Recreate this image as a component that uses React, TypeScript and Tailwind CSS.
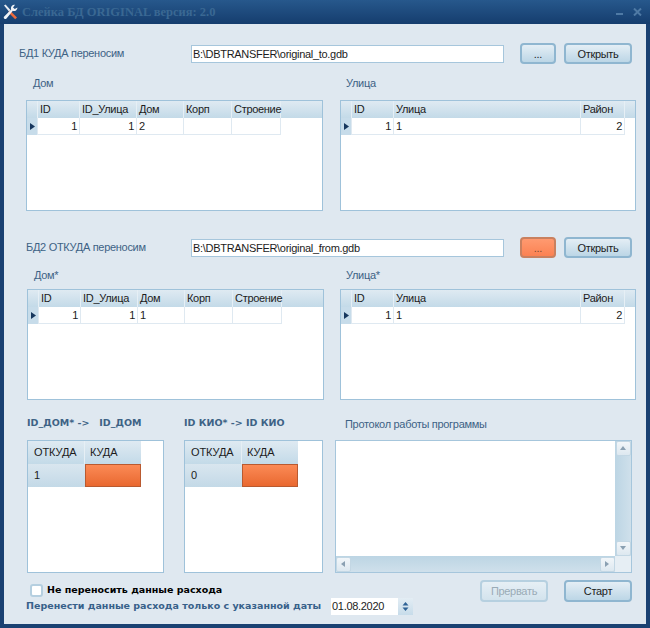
import { ReactNode } from 'react'

type Col = { label: string; width: number; right?: boolean; value: string }

const houseCols = (dom: string): Col[] => [
  { label: 'ID', width: 42, right: true, value: '1' },
  { label: 'ID_Улица', width: 57, right: true, value: '1' },
  { label: 'Дом', width: 47, value: dom },
  { label: 'Корп', width: 48, value: '' },
  { label: 'Строение', width: 49, value: '' },
]

const streetCols: Col[] = [
  { label: 'ID', width: 42, right: true, value: '1' },
  { label: 'Улица', width: 187, value: '1' },
  { label: 'Район', width: 44, right: true, value: '2' },
]

function DataGrid({ cols, width }: { cols: Col[]; width: string }) {
  return (
    <div className={`${width} h-[111px] bg-white border border-[#9fc2da]`}>
      <div className="flex h-[17px] bg-gradient-to-b from-[#dfeaf2] to-[#c3dae8]">
        <div className="w-[11px] border-r border-[#e6eff5]" />
        {cols.map((c) => (
          <div key={c.label} style={{ width: c.width }} className="pl-[2px] leading-[17px] border-r border-[#e6eff5] text-[#1c1c1c] whitespace-nowrap">
            {c.label}
          </div>
        ))}
      </div>
      <div className="flex h-[17px]">
        <div className="w-[11px] bg-[#c7dcea] border-r border-[#dfe9f1] flex items-center justify-center">
          <svg width="5" height="7" viewBox="0 0 5 7"><path d="M0 0l5 3.500-5 3.500z" fill="#17375e" /></svg>
        </div>
        {cols.map((c) => (
          <div key={c.label} style={{ width: c.width }} className={`px-[2px] leading-[17px] border-r border-b border-[#dfe9f1] text-[#1c1c1c] ${c.right ? 'text-right' : ''}`}>
            {c.value}
          </div>
        ))}
      </div>
    </div>
  )
}

function MapGrid({ width, value }: { width: string; value: string }) {
  return (
    <div className={`${width} h-[133px] bg-white border border-[#9fc2da]`}>
      <div className="flex h-[23px] w-[113px] bg-gradient-to-b from-[#dfeaf2] to-[#c3dae8] leading-[23px] text-[#1c1c1c]">
        <div className="w-[57px] pl-[6px] border-r border-[#e6eff5] tracking-[-0.1px]">ОТКУДА</div>
        <div className="w-[56px] pl-[5px] tracking-[-0.1px]">КУДА</div>
      </div>
      <div className="flex h-[23px] w-[113px]">
        <div className="w-[57px] pl-[6px] leading-[22px] bg-gradient-to-b from-[#d9e6ef] to-[#c3d9e7] text-[#1c1c1c]">{value}</div>
        <div className="w-[56px] bg-gradient-to-b from-[#fb8a55] to-[#e9682f] border border-[#b95a30]" />
      </div>
    </div>
  )
}

function Btn({ children, width, height = 'h-[21px]', tone = 'blue' }: { children: ReactNode; width: string; height?: string; tone?: 'blue' | 'orange' | 'off' }) {
  const tones = {
    blue: 'from-[#e4eef5] to-[#bcd6e6] border-[#8fb6d0] text-[#1c1c1c]',
    orange: 'from-[#ff9a70] to-[#fb8152] border-[#c9805f] text-[#7a4a30]',
    off: 'from-[#e6eff5] to-[#d3e3ed] border-[#b6d0e0] text-[#9aabb6]',
  }
  return (
    <button className={`${width} ${height} shrink-0 rounded-[4px] border-2 bg-gradient-to-b text-center leading-[16px] ${tones[tone]}`}>
      {children}
    </button>
  )
}

function ScrollBtn({ dir }: { dir: 'up' | 'down' | 'left' | 'right' }) {
  const paths = { up: 'M0 4l3-4 3 4z', down: 'M0 0l3 4 3-4z', left: 'M4 0l-4 3 4 3z', right: 'M0 0l4 3-4 3z' }
  return (
    <div className="w-[15px] h-[15px] shrink-0 rounded-[2px] bg-gradient-to-b from-[#f2f6f9] to-[#dde8f0] border border-[#c3d7e4] flex items-center justify-center">
      <svg width="6" height="6" viewBox="0 0 6 6"><path d={paths[dir]} fill="#8aa0b2" /></svg>
    </div>
  )
}

function PathRow({ label, labelClass, path, browse }: { label: string; labelClass: string; path: string; browse: 'blue' | 'orange' }) {
  return (
    <div className="flex items-center h-[21px]">
      <div className={`${labelClass} text-[#3d6285] whitespace-nowrap`}>{label}</div>
      <input
        readOnly
        value={path}
        className="w-[313px] h-[18px] shrink-0 bg-white border border-[#a6c6dc] px-[1px] text-[#1c1c1c] outline-none"
      />
      <div className="ml-[16px] mr-[8px]"><Btn width="w-[36px]" tone={browse}>...</Btn></div>
      <Btn width="w-[68px]">Открыть</Btn>
    </div>
  )
}

export default function App() {
  return (
    <div className="w-[650px] h-[628px] flex flex-col overflow-hidden bg-[#1a4172] text-[11px] tracking-[-0.3px] font-['Liberation_Sans',sans-serif]">
      {/* Title bar */}
      <div className="h-[24px] shrink-0 flex items-center bg-gradient-to-b from-[#27588c] to-[#153d6e]">
        <svg className="ml-[3px] mr-[4px]" width="15" height="16" viewBox="0 0 15 16">
          {/* screwdriver */}
          <path d="M1 1.500l1.500-1 5 5.500-1.500 1.500z" fill="#e9edf3" />
          <path d="M7 6.500l7 7-1.800 1.800-7-7z" fill="#ec6a3c" />
          {/* wrench */}
          <path d="M14.500 3.500a3.500 3.500 0 0 1-4.700 3.300L3.500 14.500a1.500 1.500 0 0 1-2.300-2l7-7a3.500 3.500 0 0 1 3.800-4.700L10 3.500l1.800 1.500z" fill="#f0f3f7" />
        </svg>
        <span className="font-['Liberation_Serif',serif] font-bold text-[12.5px] tracking-normal text-[#3a6893] whitespace-nowrap">Слейка БД ORIGINAL версия: 2.0</span>
        <div className="ml-auto flex items-center gap-[10px] mr-[8px]">
          <div className="w-[7px] h-[2px] mt-[4px] bg-[#4f7aa5]" />
          <svg width="9" height="8" viewBox="0 0 9 8"><path d="M1 .500l7 7M8 .500l-7 7" stroke="#4f7aa5" strokeWidth="2" /></svg>
        </div>
      </div>

      {/* Form */}
      <div className="flex-1 mx-[4px] mb-[4px] bg-[#dfe8f0] pt-[19px]">
        <PathRow label="БД1 КУДА переносим" labelClass="pl-[15px] w-[187px] shrink-0" path="B:\DBTRANSFER\original_to.gdb" browse="blue" />

        <div className="flex mt-[11px] h-[25px] text-[#3d6285]">
          <div className="ml-[29px] w-[313px]">Дом</div>
          <div>Улица</div>
        </div>
        <div className="flex pl-[22px] gap-[17px]">
          <DataGrid cols={houseCols('2')} width="w-[297px]" />
          <DataGrid cols={streetCols} width="w-[296px]" />
        </div>

        <div className="mt-[26px]">
          <PathRow label="БД2 ОТКУДА переносим" labelClass="pl-[22px] w-[187px] shrink-0" path="B:\DBTRANSFER\original_from.gdb" browse="orange" />
        </div>

        <div className="flex mt-[9px] h-[22px] text-[#3d6285]">
          <div className="ml-[30px] w-[312px]">Дом*</div>
          <div>Улица*</div>
        </div>
        <div className="flex pl-[23px] gap-[16px]">
          <DataGrid cols={houseCols('1')} width="w-[297px]" />
          <DataGrid cols={streetCols} width="w-[296px]" />
        </div>

        <div className="flex mt-[16px] h-[24px] text-[#3d6285]">
          <div className="ml-[23px] w-[157px] font-['DejaVu_Sans',sans-serif] font-bold text-[9.5px] tracking-normal whitespace-nowrap">ID_ДОМ* -&gt;&nbsp;&nbsp;&nbsp;ID_ДОМ</div>
          <div className="w-[161px] font-['DejaVu_Sans',sans-serif] font-bold text-[9.5px] tracking-normal whitespace-nowrap">ID КИО* -&gt; ID КИО</div>
          <div>Протокол работы программы</div>
        </div>

        <div className="flex pl-[23px]">
          <MapGrid width="w-[137px]" value="1" />
          <div className="ml-[20px]"><MapGrid width="w-[139px]" value="0" /></div>

          {/* Log box with scrollbars */}
          <div className="ml-[12px] w-[297px] h-[133px] border border-[#a6c6dc] flex flex-col">
            <div className="flex-1 flex min-h-0">
              <div className="flex-1 bg-white" />
              <div className="w-[16px] flex flex-col justify-between items-center bg-gradient-to-r from-[#bcd5e4] to-[#cfe0eb]">
                <ScrollBtn dir="up" />
                <ScrollBtn dir="down" />
              </div>
            </div>
            <div className="h-[16px] flex">
              <div className="flex-1 flex justify-between items-center bg-gradient-to-b from-[#bcd5e4] to-[#cfe0eb]">
                <ScrollBtn dir="left" />
                <ScrollBtn dir="right" />
              </div>
              <div className="w-[16px] bg-[#e6eef4]" />
            </div>
          </div>
        </div>

        {/* Footer */}
        <div className="flex mt-[7px]">
          <div className="pl-[22px] w-[302px] shrink-0 pt-[1px]">
            <div className="flex items-center gap-[4px] pl-[4px] h-[17px] mt-[1px]">
              <div className="w-[13px] h-[13px] bg-white border-2 border-[#b5cfe0] rounded-[3px]" />
              <span className="font-['DejaVu_Sans',sans-serif] font-bold text-[9.5px] tracking-normal text-black whitespace-nowrap">Не переносить данные расхода</span>
            </div>
            <div className="font-['DejaVu_Sans',sans-serif] font-bold text-[9.5px] tracking-normal text-[#38618a] whitespace-nowrap leading-[14px]">Перенести данные расхода только с указанной даты</div>
          </div>
          <div className="flex flex-col">
            <div className="flex justify-end w-[326px] gap-[16px]">
              <Btn width="w-[68px]" height="h-[22px]" tone="off">Прервать</Btn>
              <Btn width="w-[68px]" height="h-[22px]">Старт</Btn>
            </div>
            <div className="flex -mt-[4px] ml-[25px] w-[82px] h-[17px]">
              <div className="flex-1 bg-white px-[1px] leading-[17px] text-[#1c1c1c]">01.08.2020</div>
              <div className="w-[15px] bg-gradient-to-b from-[#e3edf4] to-[#c7dcea] flex items-center justify-center">
                <svg width="7" height="11" viewBox="0 0 7 11"><path d="M3.500 1l3 3.500h-6zM3.500 10l3-3.500h-6z" fill="#2f6396" /></svg>
              </div>
            </div>
          </div>
        </div>
      </div>
    </div>
  )
}
